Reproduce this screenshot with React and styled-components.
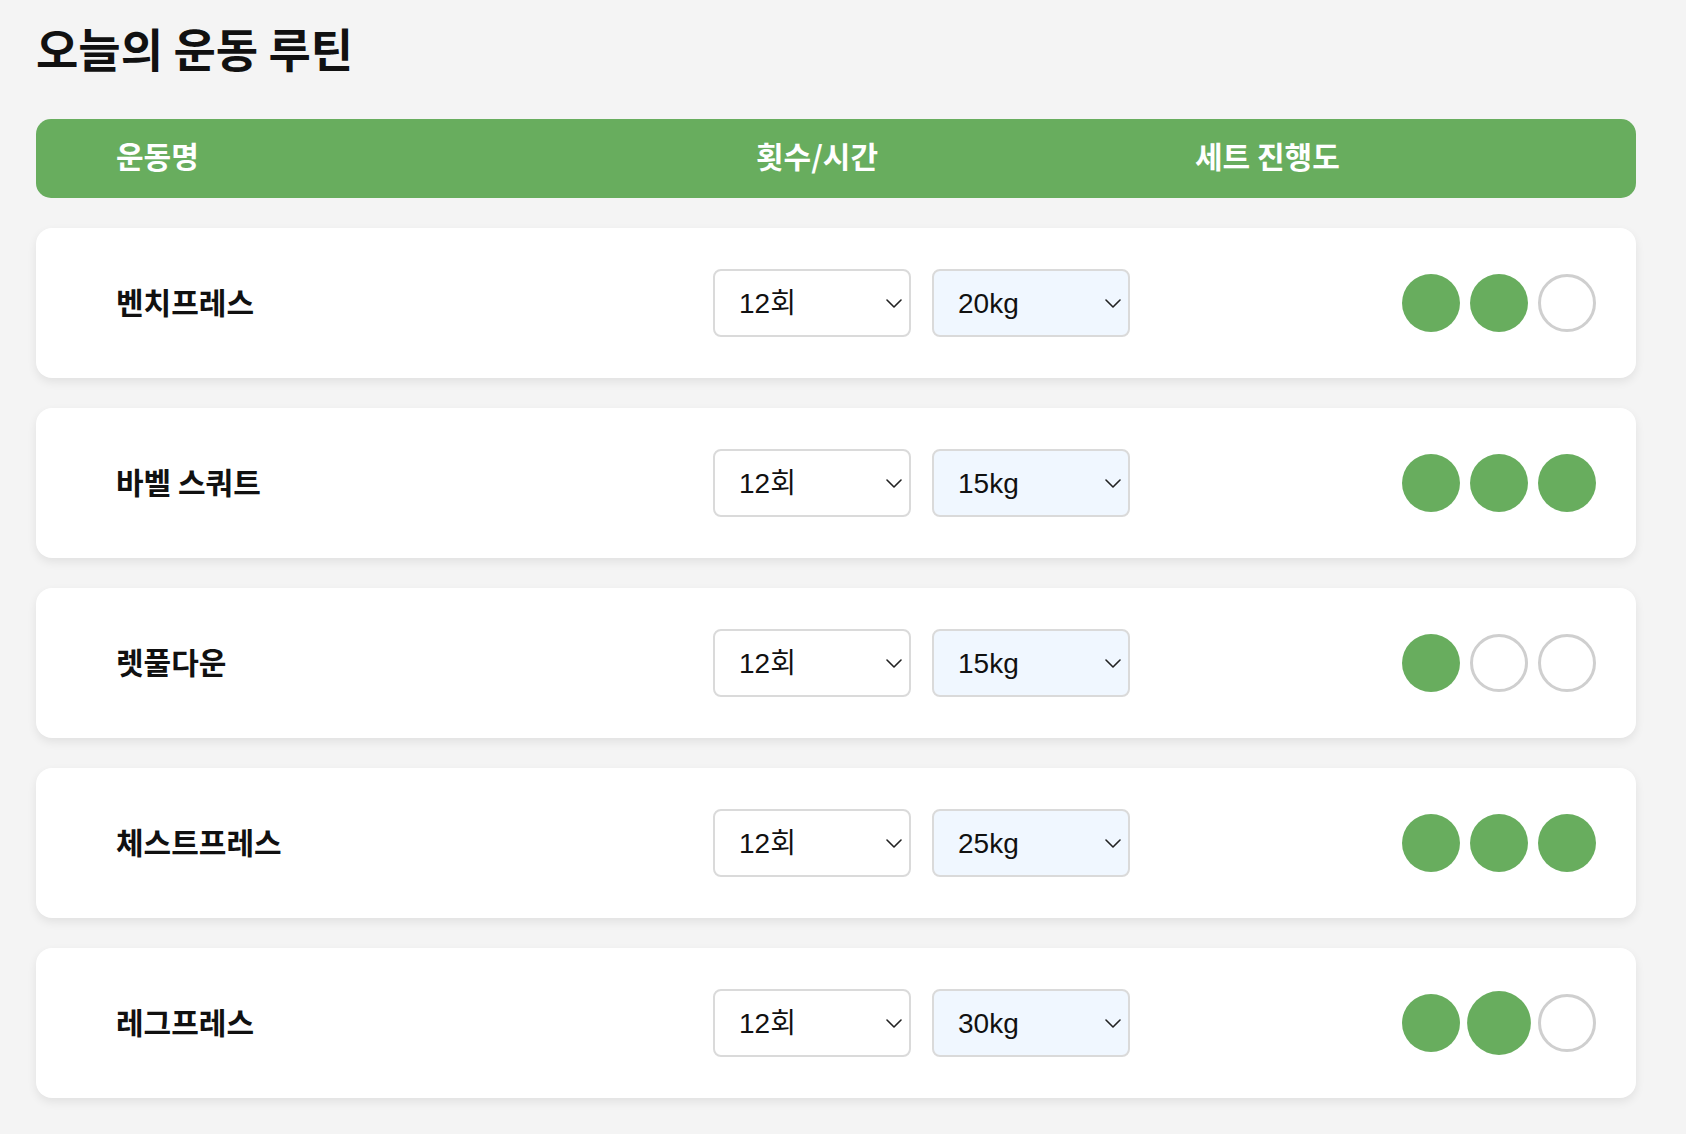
import React from "react";
import styled, { createGlobalStyle } from "styled-components";

const GlobalStyle = createGlobalStyle`
  html, body {
    margin: 0;
    padding: 0;
    background: #f4f4f4;
  }
  body {
    font-family: "Noto Sans CJK KR", "Noto Sans", sans-serif;
    color: #111;
  }
`;

const GREEN = "#68ad5e";

const Page = styled.div`
  width: 1600px;
  padding: 20px 0 36px 36px;
`;

const Title = styled.h1`
  margin: 0 0 44px 0;
  font-size: 46px;
  line-height: 55px;
  font-weight: 700;
  color: #111;
`;

const HeaderBar = styled.div`
  box-sizing: border-box;
  display: grid;
  grid-template-columns: 640px 439px 1fr;
  align-items: center;
  height: 79px;
  padding: 0 0 7px 80px;
  background: ${GREEN};
  border-radius: 15px;
  color: #fff;
  font-size: 30px;
  font-weight: 700;
`;

const HeaderCell = styled.div`
  white-space: nowrap;
`;

const List = styled.div`
  display: flex;
  flex-direction: column;
  gap: 30px;
  margin-top: 30px;
`;

const Card = styled.div`
  box-sizing: border-box;
  display: grid;
  grid-template-columns: 597px 419px 1fr;
  align-items: center;
  height: 150px;
  padding: 0 40px 0 80px;
  background: #fff;
  border-radius: 16px;
  box-shadow: 0 4px 10px rgba(0, 0, 0, 0.08);
`;

const Name = styled.div`
  font-size: 30px;
  font-weight: 700;
  color: #111;
  white-space: nowrap;
  padding-bottom: 4px;
`;

const Selects = styled.div`
  display: flex;
  gap: 21px;
`;

const SelectWrap = styled.div`
  position: relative;
  width: 198px;
  height: 68px;
`;

const Select = styled.select`
  appearance: none;
  -webkit-appearance: none;
  box-sizing: border-box;
  width: 100%;
  height: 100%;
  margin: 0;
  padding: 0 30px 0 24px;
  border: 2px solid #dadada;
  border-radius: 8px;
  background: ${(p) => (p.$tint ? "#f0f7ff" : "#fff")};
  color: #111;
  font-family: "Liberation Sans", "Noto Sans CJK KR", sans-serif;
  font-size: 28px;
  outline: none;
`;

const Chevron = styled.svg`
  position: absolute;
  right: 9px;
  top: 30px;
  width: 16px;
  height: 9px;
  pointer-events: none;
`;

const Dots = styled.div`
  display: flex;
  gap: 10px;
  justify-self: end;
`;

const Dot = styled.div`
  box-sizing: border-box;
  width: 58px;
  height: 58px;
  border-radius: 50%;
  background: ${(p) => (p.$done ? GREEN : "#fff")};
  border: ${(p) => (p.$done ? "none" : "3px solid #cfcfcf")};
  transform: ${(p) => (p.$hover ? "scale(1.1)" : "none")};
`;

const ChevronIcon = () => (
  <Chevron viewBox="0 0 16 9">
    <polyline
      points="1,1 8,8 15,1"
      fill="none"
      stroke="#222"
      strokeWidth="1.6"
      strokeLinecap="round"
      strokeLinejoin="round"
    />
  </Chevron>
);

const reps = ["8회", "10회", "12회", "15회", "20회"];
const weights = ["10kg", "15kg", "20kg", "25kg", "30kg", "35kg"];

const routine = [
  { name: "벤치프레스", rep: "12회", weight: "20kg", sets: [1, 1, 0] },
  { name: "바벨 스쿼트", rep: "12회", weight: "15kg", sets: [1, 1, 1] },
  { name: "렛풀다운", rep: "12회", weight: "15kg", sets: [1, 0, 0] },
  { name: "체스트프레스", rep: "12회", weight: "25kg", sets: [1, 1, 1] },
  { name: "레그프레스", rep: "12회", weight: "30kg", sets: [1, 1, 0], hover: 1 },
];

export default function App() {
  return (
    <>
      <GlobalStyle />
      <Page>
        <Title>오늘의 운동 루틴</Title>
        <HeaderBar>
          <HeaderCell>운동명</HeaderCell>
          <HeaderCell>횟수/시간</HeaderCell>
          <HeaderCell>세트 진행도</HeaderCell>
        </HeaderBar>
        <List>
          {routine.map((r) => (
            <Card key={r.name}>
              <Name>{r.name}</Name>
              <Selects>
                <SelectWrap>
                  <Select defaultValue={r.rep}>
                    {reps.map((o) => (
                      <option key={o}>{o}</option>
                    ))}
                  </Select>
                  <ChevronIcon />
                </SelectWrap>
                <SelectWrap>
                  <Select $tint defaultValue={r.weight}>
                    {weights.map((o) => (
                      <option key={o}>{o}</option>
                    ))}
                  </Select>
                  <ChevronIcon />
                </SelectWrap>
              </Selects>
              <Dots>
                {r.sets.map((s, i) => (
                  <Dot key={i} $done={!!s} $hover={r.hover === i} />
                ))}
              </Dots>
            </Card>
          ))}
        </List>
      </Page>
    </>
  );
}
